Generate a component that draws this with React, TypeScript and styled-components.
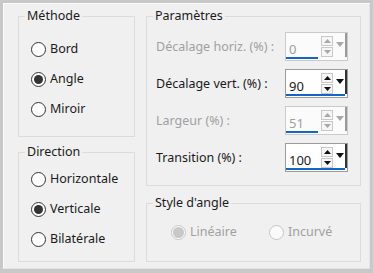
import React from "react";
import styled, { createGlobalStyle } from "styled-components";

const GlobalStyle = createGlobalStyle`
  html, body {
    margin: 0;
    padding: 0;
  }
  body {
    font-family: "Noto Sans", "Open Sans", sans-serif;
    font-size: 12.5px;
    color: #1a1a1a;
    background: #c8c8c8;
  }
  * {
    box-sizing: border-box;
  }
`;

const Frame = styled.div`
  width: 373px;
  height: 273px;
  padding: 3px 3px 4px 3px;
  background: #c8c8c8;
`;

const Panel = styled.div`
  height: 100%;
  background: #f0f0f0;
  border: 1px solid #fbfbfb;
  border-right-color: #e4e4e4;
  border-bottom-color: #e4e4e4;
  padding: 4px 8px 6px 14px;
  display: grid;
  grid-template-columns: 117px 215px;
  column-gap: 11px;
`;

const Column = styled.div<{ $gap: number }>`
  display: flex;
  flex-direction: column;
  gap: ${(p) => p.$gap}px;
  min-height: 0;
`;

const Group = styled.fieldset<{ $h?: number }>`
  margin: 0;
  padding: 0;
  min-width: 0;
  border: 1px solid #dcdcdc;
  ${(p) => (p.$h ? `height: ${p.$h}px;` : "flex: 1;")}
`;

const Legend = styled.legend`
  margin-left: 6px;
  padding: 0 2px;
  line-height: 16px;
  color: #1a1a1a;
`;

const Body = styled.div<{ $pt: number; $pl: number }>`
  padding: ${(p) => p.$pt}px 12px 0 ${(p) => p.$pl}px;
`;

const RadioRow = styled.label<{ $w?: number }>`
  display: flex;
  align-items: center;
  gap: 4px;
  height: 30px;
  ${(p) => (p.$w ? `width: ${p.$w}px;` : "")}
`;

const Circle = styled.span<{ $checked?: boolean; $disabled?: boolean }>`
  width: 15px;
  height: 15px;
  border-radius: 50%;
  flex: none;
  border: 1px solid ${(p) => (p.$disabled ? "#c6c6c6" : "#333")};
  background: ${(p) => (p.$disabled ? "#fafafa" : "#fff")};
  display: flex;
  align-items: center;
  justify-content: center;
  &::after {
    content: "";
    display: ${(p) => (p.$checked ? "block" : "none")};
    width: ${(p) => (p.$disabled ? 11 : 9)}px;
    height: ${(p) => (p.$disabled ? 11 : 9)}px;
    border-radius: 50%;
    background: ${(p) => (p.$disabled ? "#c8c8c8" : "#333")};
  }
`;

const Caption = styled.span<{ $disabled?: boolean }>`
  line-height: 16px;
  color: ${(p) => (p.$disabled ? "#a0a0a0" : "#1a1a1a")};
  white-space: nowrap;
`;

const Inline = styled.div`
  display: flex;
`;

const Rows = styled.div`
  display: flex;
  flex-direction: column;
  gap: 8px;
`;

const ParamRow = styled.div`
  display: flex;
  align-items: center;
  justify-content: space-between;
  height: 29px;
`;

const Field = styled.div<{ $disabled?: boolean }>`
  width: 63px;
  height: 29px;
  display: flex;
  flex-direction: column;
  border: 1px solid ${(p) => (p.$disabled ? "#cacaca" : "#9c9c9c")};
  background: ${(p) => (p.$disabled ? "#fbfbfb" : "#fff")};
`;

const FieldMain = styled.div`
  flex: 1;
  display: flex;
`;

const Value = styled.span<{ $disabled?: boolean }>`
  flex: 1;
  padding: 8px 0 0 3px;
  line-height: 16px;
  font-size: 13px;
  color: ${(p) => (p.$disabled ? "#a0a0a0" : "#1a1a1a")};
`;

const Spin = styled.div`
  width: 13px;
  display: flex;
  flex-direction: column;
  gap: 1px;
  padding-top: 3px;
`;

const SpinBtn = styled.div`
  width: 12px;
  height: 10px;
  border: 1px solid #c8c8c8;
  background: #f6f6f6;
  display: flex;
  align-items: center;
  justify-content: center;
`;

const Drop = styled.div<{ $disabled?: boolean }>`
  width: 13px;
  display: flex;
  align-items: center;
  justify-content: center;
  padding-bottom: 2px;
  border-right: 2px solid ${(p) => (p.$disabled ? "#9a9a9a" : "#333")};
`;

const Bar = styled.div<{ $w: number }>`
  height: 3px;
  width: ${(p) => p.$w}px;
  margin-bottom: 1px;
  background: #1467c0;
`;

const Tri: React.FC<{ up?: boolean; color: string; w: number; h: number }> = ({
  up,
  color,
  w,
  h,
}) => (
  <svg width={w} height={h} viewBox={`0 0 ${w} ${h}`}>
    <polygon
      points={up ? `0,${h} ${w / 2},0 ${w},${h}` : `0,0 ${w},0 ${w / 2},${h}`}
      fill={color}
    />
  </svg>
);

type Radio = { label: string; checked?: boolean };

const methode: Radio[] = [
  { label: "Bord" },
  { label: "Angle", checked: true },
  { label: "Miroir" },
];

const direction: Radio[] = [
  { label: "Horizontale" },
  { label: "Verticale", checked: true },
  { label: "Bilatérale" },
];

const params = [
  { label: "Décalage horiz. (%) :", value: "0", disabled: true },
  { label: "Décalage vert. (%) :", value: "90" },
  { label: "Largeur (%) :", value: "51", disabled: true },
  { label: "Transition (%) :", value: "100" },
];

const NumberField: React.FC<{ value: string; disabled?: boolean }> = ({
  value,
  disabled,
}) => {
  const arrow = disabled ? "#a8a8a8" : "#111";
  return (
    <Field $disabled={disabled}>
      <FieldMain>
        <Value $disabled={disabled}>{value}</Value>
        <Spin>
          <SpinBtn>
            <Tri up color={arrow} w={7} h={4} />
          </SpinBtn>
          <SpinBtn>
            <Tri color={arrow} w={7} h={4} />
          </SpinBtn>
        </Spin>
        <Drop $disabled={disabled}>
          <Tri color={arrow} w={8} h={5} />
        </Drop>
      </FieldMain>
      <Bar $w={disabled ? 32 : 59} />
    </Field>
  );
};

export default function App() {
  return (
    <Frame>
      <GlobalStyle />
      <Panel>
        <Column $gap={7}>
          <Group $h={129}>
            <Legend>Méthode</Legend>
            <Body $pt={10} $pl={12}>
              {methode.map((r) => (
                <RadioRow key={r.label}>
                  <Circle $checked={r.checked} />
                  <Caption>{r.label}</Caption>
                </RadioRow>
              ))}
            </Body>
          </Group>
          <Group>
            <Legend>Direction</Legend>
            <Body $pt={4} $pl={12}>
              {direction.map((r) => (
                <RadioRow key={r.label}>
                  <Circle $checked={r.checked} />
                  <Caption>{r.label}</Caption>
                </RadioRow>
              ))}
            </Body>
          </Group>
        </Column>
        <Column $gap={9}>
          <Group $h={178}>
            <Legend>Paramètres</Legend>
            <Body $pt={8} $pl={9}>
              <Rows>
                {params.map((p) => (
                  <ParamRow key={p.label}>
                    <Caption $disabled={p.disabled}>{p.label}</Caption>
                    <NumberField value={p.value} disabled={p.disabled} />
                  </ParamRow>
                ))}
              </Rows>
            </Body>
          </Group>
          <Group>
            <Legend>Style d'angle</Legend>
            <Body $pt={6} $pl={24}>
              <Inline>
                <RadioRow $w={98}>
                  <Circle $checked $disabled />
                  <Caption $disabled>Linéaire</Caption>
                </RadioRow>
                <RadioRow>
                  <Circle $disabled />
                  <Caption $disabled>Incurvé</Caption>
                </RadioRow>
              </Inline>
            </Body>
          </Group>
        </Column>
      </Panel>
    </Frame>
  );
}
